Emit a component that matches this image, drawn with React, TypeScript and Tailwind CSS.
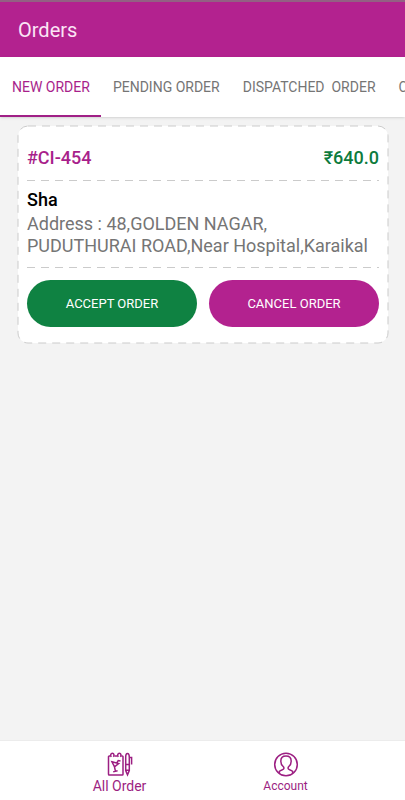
import React, { useState } from 'react';

type Order = {
  id: string;
  amount: string;
  customer: string;
  address: string;
};

const tabs = ['NEW ORDER', 'PENDING ORDER', 'DISPATCHED  ORDER', 'COMPLETED ORDER'];

const orders: Order[] = [
  {
    id: '#CI-454',
    amount: '₹640.0',
    customer: 'Sha',
    address: 'Address : 48,GOLDEN NAGAR, PUDUTHURAI ROAD,Near Hospital,Karaikal',
  },
];

const DashedLine: React.FC = () => (
  <div className="h-px bg-[repeating-linear-gradient(90deg,#cbcbcb_0_8px,transparent_8px_14px)]" />
);

const OrdersIcon: React.FC = () => (
  <svg width="26" height="25" viewBox="0 0 26 25" fill="none" stroke="currentColor" strokeWidth="1.5" aria-hidden="true">
    <path d="M3.6 4H2.2a.7.7 0 0 0-.7.7v17.6c0 .5.3.8.8.8h12.9c.5 0 .8-.3.8-.8V4.7c0-.4-.3-.7-.7-.7h-1.100M7.300 4h3.100" />
    <path d="M4.2 5c-1-1.800-.5-3.800 1.200-3.800s2 2.200.9 3.600M11.200 5c-1-1.800-.5-3.800 1.200-3.800s2 2.200.9 3.600" />
    <path d="M5 9.800l6.600 1.700-4.100 3.300zM7.500 14.800l.9 4.400M6.200 19.700l4.400-.9M9.800 10.800l1.400-2.300 2.300.6" />
    <path d="M18.700 5.200c0-2.600.6-3.800 1.800-3.800s1.800 1.200 1.800 3.800v13.300l-1.800 4.300-1.800-4.300zM18.700 12.500h3.600M18.700 18.200h3.600M22.300 5.500h2.300v7" />
  </svg>
);

const AccountIcon: React.FC = () => (
  <svg width="26" height="25" viewBox="0 0 26 25" fill="none" stroke="currentColor" strokeWidth="1.5" aria-hidden="true">
    <circle cx="13" cy="12.5" r="11.3" />
    <path d="M6.500 21l-.3-1.500c1-1.200 2.200-1.500 3.500-1.900 1.500-.6 1.500-1.700.7-2.800C8.500 13.200 7.800 11.400 7.800 9.200 7.800 6 9.800 4 13 4s5.200 2 5.200 5.200c0 2.200-.7 4-2.600 5.600-.8 1.100-.8 2.200.7 2.800 1.300.4 2.500.7 3.500 1.900l-.3 1.500" />
  </svg>
);

const OrderCard: React.FC<{ order: Order }> = ({ order }) => (
  <article className="relative rounded-[10px] bg-white px-[9px] pt-[22px] pb-4">
    <svg className="pointer-events-none absolute inset-0 h-full w-full overflow-visible" aria-hidden="true">
      <rect width="100%" height="100%" rx="10" fill="none" stroke="#cbcbcb" strokeDasharray="8 6" />
    </svg>
    <div className="flex items-center justify-between pb-3 text-lg leading-5 font-medium">
      <h2 className="text-[#a81f8b]">{order.id}</h2>
      <span className="text-[#0d7b3d]">{order.amount}</span>
    </div>
    <DashedLine />
    <div className="pt-2 pb-[10px] text-lg leading-[22px] text-[#757575]">
      <h3 className="mb-[2px] font-medium text-black">{order.customer}</h3>
      <p>{order.address}</p>
    </div>
    <DashedLine />
    <div className="mt-3 grid grid-cols-2 gap-3 text-[13px] text-white">
      <button type="button" className="h-[47px] rounded-full bg-[#0f8242]">
        ACCEPT ORDER
      </button>
      <button type="button" className="h-[47px] rounded-full bg-[#b3228f]">
        CANCEL ORDER
      </button>
    </div>
  </article>
);

export default function App() {
  const [active, setActive] = useState(0);

  return (
    <div className="flex min-h-screen flex-col bg-[#f3f3f3] font-[Roboto,sans-serif]">
      <header className="flex h-[57px] items-center border-t-2 border-[#936083] bg-[#b3228f] px-[18px]">
        <h1 className="text-xl text-[#fbe4f6]">Orders</h1>
      </header>

      <nav className="flex h-[60px] overflow-x-auto bg-white shadow-sm [scrollbar-width:none]">
        {tabs.map((tab, i) => (
          <button
            key={tab}
            type="button"
            onClick={() => setActive(i)}
            className={`shrink-0 border-b-2 pt-[2px] pr-[11px] pl-3 text-sm whitespace-pre ${
              i === active ? 'border-[#a01f86] text-[#a81f8b]' : 'border-transparent text-[#757575]'
            }`}
          >
            {tab}
          </button>
        ))}
      </nav>

      <main className="flex-1 pt-[9px] pr-[17px] pl-[18px]">
        {orders.map((order) => (
          <OrderCard key={order.id} order={order} />
        ))}
      </main>

      <footer className="flex h-[60px] justify-center border-t border-[#ececec] bg-white text-[#9c1f82]">
        <a href="#orders" className="flex w-[166px] flex-col items-center pt-[11px] text-sm leading-[18px]">
          <OrdersIcon />
          All Order
        </a>
        <a href="#account" className="flex w-[166px] flex-col items-center pt-[11px] text-xs leading-[18px]">
          <AccountIcon />
          Account
        </a>
      </footer>
    </div>
  );
}
